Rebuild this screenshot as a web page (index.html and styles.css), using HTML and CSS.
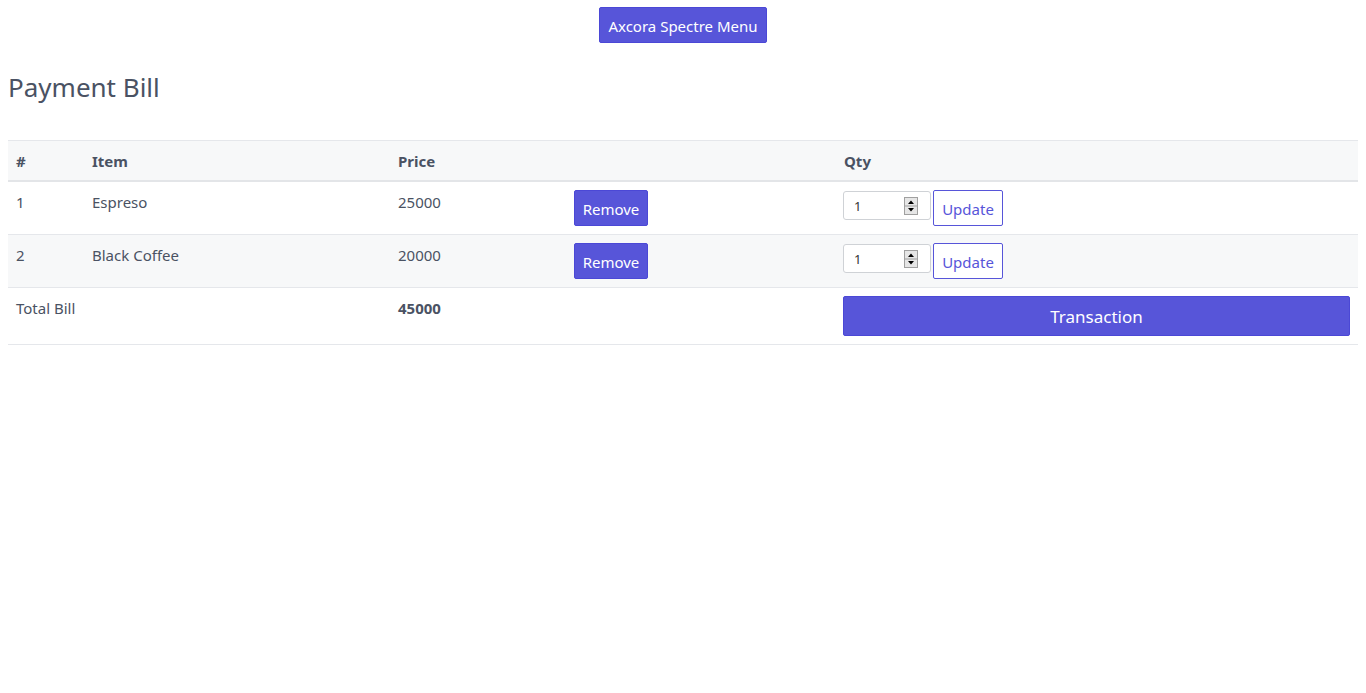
FILE: index.html
```html
<!DOCTYPE html>
<html lang="en">
<head>
<meta charset="utf-8">
<title>Payment Bill</title>
<link rel="stylesheet" href="styles.css">
</head>
<body>
<div class="top">
  <button class="btn btn-primary">Axcora Spectre Menu</button>
</div>
<h2 class="title">Payment Bill</h2>
<table class="table">
  <colgroup>
    <col class="c1"><col class="c2"><col class="c3"><col class="c4"><col class="c5">
  </colgroup>
  <thead>
    <tr><th>#</th><th>Item</th><th>Price</th><th></th><th>Qty</th></tr>
  </thead>
  <tbody>
    <tr>
      <td>1</td><td>Espreso</td><td>25000</td>
      <td><button class="btn btn-primary">Remove</button></td>
      <td><div class="qty"><span class="num"><input type="text" value="1"><span class="spin"><svg width="14" height="18" viewBox="0 0 14 18"><rect x="0.5" y="0.5" width="13" height="17" fill="#e6e6e6" stroke="#a0a0a0"/><line x1="1" y1="9" x2="13" y2="9" stroke="#a0a0a0"/><path d="M4 7 L10 7 L7 3.5 Z" fill="#000"/><path d="M4 11 L10 11 L7 14.5 Z" fill="#000"/></svg></span></span><button class="btn btn-outline">Update</button></div></td>
    </tr>
    <tr class="striped">
      <td>2</td><td>Black Coffee</td><td>20000</td>
      <td><button class="btn btn-primary">Remove</button></td>
      <td><div class="qty"><span class="num"><input type="text" value="1"><span class="spin"><svg width="14" height="18" viewBox="0 0 14 18"><rect x="0.5" y="0.5" width="13" height="17" fill="#e6e6e6" stroke="#a0a0a0"/><line x1="1" y1="9" x2="13" y2="9" stroke="#a0a0a0"/><path d="M4 7 L10 7 L7 3.5 Z" fill="#000"/><path d="M4 11 L10 11 L7 14.5 Z" fill="#000"/></svg></span></span><button class="btn btn-outline">Update</button></div></td>
    </tr>
    <tr>
      <td>Total Bill</td><td></td><td class="bold">45000</td><td></td>
      <td><button class="btn btn-primary btn-block">Transaction</button></td>
    </tr>
  </tbody>
</table>
</body>
</html>
```
FILE: styles.css
```css
html, body {
  margin: 0;
  padding: 0;
}
body {
  padding: 7px 8px 0;
  font-family: "Noto Sans", "Open Sans", sans-serif;
  font-size: 15px;
  line-height: 24px;
  color: #4a5263;
  background: #fff;
}
.top {
  display: flex;
  justify-content: center;
}
.btn {
  font-family: inherit;
  font-size: 15px;
  line-height: 20px;
  height: 36px;
  padding: 8px 9px 6px;
  border-radius: 2px;
  border: 1px solid #5755d9;
  cursor: pointer;
}
.btn-primary {
  background: #5755d9;
  color: #fff;
  border-color: #4b48d6;
}
.btn-outline {
  background: #fff;
  color: #5755d9;
}
.btn-block {
  width: calc(100% + 1px);
  margin-left: -1px;
  height: 40px;
  font-size: 17px;
}
.top .btn {
  width: 168px;
  padding: 8px 0 6px;
}
.title {
  font-size: 26px;
  font-weight: 400;
  line-height: 34px;
  margin: 27px 0 0;
  height: 34px;
}
.table {
  margin-top: 36px;
  width: 1350px;
  border-collapse: collapse;
  table-layout: fixed;
}
.c1 { width: 76px; }
.c2 { width: 306px; }
.c3 { width: 176px; }
.c4 { width: 270px; }
.c5 { width: 522px; }
.table th, .table td {
  padding: 8px;
  text-align: left;
  vertical-align: top;
  border-top: 1px solid #e5e7eb;
}
.table th {
  font-weight: 700;
  background: #f7f8f9;
  padding-bottom: 7px;
  border-bottom: 2px solid #e3e5e8;
}
.table tbody tr:last-child td {
  border-bottom: 1px solid #e5e7eb;
}
.striped td {
  background: #f7f8f9;
}
.bold {
  font-weight: 700;
}
.table td .btn-primary:not(.btn-block) {
  width: 74px;
  padding: 8px 0 6px;
}
.qty {
  display: flex;
  gap: 2px;
  align-items: flex-start;
  margin-left: -1px;
}
.num {
  display: flex;
  align-items: center;
  width: 88px;
  height: 29px;
  box-sizing: border-box;
  margin-top: 1px;
  border: 1px solid #cfd2d6;
  border-radius: 3px;
  background: #fff;
}
.num input {
  border: 0;
  outline: 0;
  width: 50px;
  padding: 0 0 0 10px;
  font-family: "Noto Sans", sans-serif;
  font-size: 13px;
  color: #333;
  background: transparent;
}
.spin {
  display: flex;
  margin-left: 0;
}
.spin svg { display: block; }
.btn-outline {
  width: 70px;
  padding: 8px 0 6px;
}
```
